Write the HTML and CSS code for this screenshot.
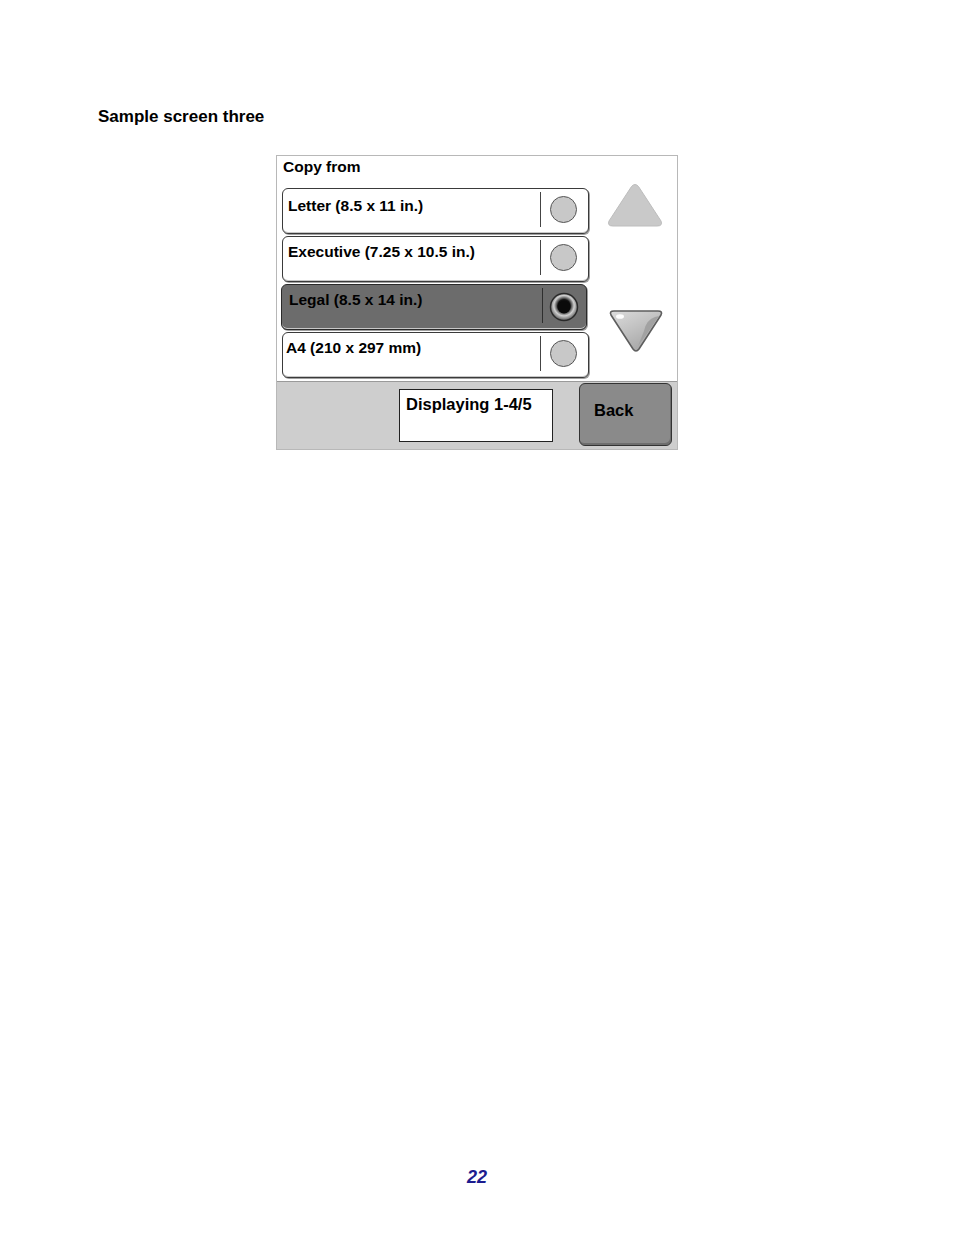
FILE: index.html
```html
<!DOCTYPE html>
<html>
<head>
<meta charset="utf-8">
<link rel="stylesheet" href="styles.css">
</head>
<body>
<div class="page">
  <h2 class="heading">Sample screen three</h2>
  <div class="screen">
    <div class="main">
      <div class="listcol">
        <div class="title">Copy from</div>
        <div class="rows">
          <div class="row r1">
            <span class="label">Letter (8.5 x 11 in.)</span>
            <span class="divider"></span>
            <span class="radio"></span>
          </div>
          <div class="row r2">
            <span class="label">Executive (7.25 x 10.5 in.)</span>
            <span class="divider"></span>
            <span class="radio"></span>
          </div>
          <div class="row r3 selected">
            <span class="label">Legal (8.5 x 14 in.)</span>
            <span class="divider"></span>
            <svg class="radio-sel" width="30" height="30" viewBox="0 0 30 30">
              <defs>
                <radialGradient id="rg" cx="50%" cy="45%" r="50%">
                  <stop offset="0%" stop-color="#111"/>
                  <stop offset="45%" stop-color="#111"/>
                  <stop offset="55%" stop-color="#555"/>
                  <stop offset="75%" stop-color="#d0d0d0"/>
                  <stop offset="100%" stop-color="#7a7a7a"/>
                </radialGradient>
              </defs>
              <circle cx="15" cy="15" r="13.5" fill="url(#rg)" stroke="#2a2a2a" stroke-width="1.5"/>
              <circle cx="15" cy="15" r="6.5" fill="#0a0a0a"/>
            </svg>
          </div>
          <div class="row r4">
            <span class="label">A4 (210 x 297 mm)</span>
            <span class="divider"></span>
            <span class="radio"></span>
          </div>
        </div>
      </div>
      <div class="arrows">
        <svg class="up" width="56" height="45" viewBox="0 0 56 45">
          <path d="M24.5 3.5 Q28 -0.5 31.5 3.5 L54 38 Q56 43 50 43 L6 43 Q0 43 2 38 Z" fill="#c9c9c9" stroke="#bdbdbd" stroke-width="1"/>
        </svg>
        <svg class="down" width="56" height="44" viewBox="0 0 56 44">
          <defs>
            <linearGradient id="dg" x1="0" y1="0" x2="0.6" y2="1">
              <stop offset="0%" stop-color="#dcdcdc"/>
              <stop offset="50%" stop-color="#c2c2c2"/>
              <stop offset="100%" stop-color="#a6a6a6"/>
            </linearGradient>
          </defs>
          <path d="M6 2 L50 2 Q55 2 53 6 L31 40 Q28 44 25 40 L3 6 Q1 2 6 2 Z" fill="url(#dg)" stroke="#5e5e5e" stroke-width="1.6"/>
          <path d="M47 8 Q38 11 36 22 L30 37 Q40 24 51 7 Z" fill="#a2a2a2"/>
          <ellipse cx="12" cy="7.5" rx="4" ry="2.3" fill="#ffffff" opacity="0.95"/>
        </svg>
      </div>
    </div>
    <div class="footer">
      <div class="display">Displaying 1-4/5</div>
      <div class="back">Back</div>
    </div>
  </div>
  <div class="pagenum">22</div>
</div>
</body>
</html>
```
FILE: styles.css
```css
html, body {
  margin: 0;
  padding: 0;
  background: #ffffff;
}
body {
  font-family: "Liberation Sans", Arial, sans-serif;
  color: #000;
}
.page {
  width: 954px;
  height: 1235px;
  padding-top: 107px;
  box-sizing: border-box;
}
.heading {
  margin: 0 0 0 98px;
  font-size: 17px;
  line-height: 20px;
  font-weight: bold;
}
.screen {
  margin: 28px 0 0 276px;
  width: 402px;
  height: 295px;
  box-sizing: border-box;
  border: 1px solid #b8b8b8;
  display: flex;
  flex-direction: column;
  background: #fff;
}
.main {
  display: flex;
  height: 225px;
}
.listcol {
  width: 313px;
  padding-left: 5px;
}
.title {
  padding: 2px 0 0 1px;
  font-size: 15.5px;
  line-height: 18px;
  font-weight: bold;
  margin-bottom: 12px;
}
.rows {
  display: flex;
  flex-direction: column;
  gap: 2px;
}
.row {
  position: relative;
  width: 307px;
  height: 46px;
  box-sizing: border-box;
  border: 1px solid #3a3a3a;
  border-radius: 6px;
  box-shadow: 1px 1px 0 #a0a0a0, inset 0 -1px 0 #c8c8c8;
  background: #fff;
  display: flex;
  align-items: flex-start;
}
.label {
  width: 257px;
  padding: 8px 0 0 5px;
  box-sizing: border-box;
  font-size: 15.5px;
  line-height: 18px;
  font-weight: bold;
  white-space: nowrap;
}
.r4 .label { padding-left: 3px; padding-top: 6px; }
.r2 .label { padding-top: 6px; }
.divider {
  width: 1px;
  height: 35px;
  margin-top: 3px;
  background: #444;
}
.radio {
  width: 25px;
  height: 25px;
  margin: 7px 0 0 9px;
  border-radius: 50%;
  background: #c8c8c8;
  border: 1.5px solid #555;
}
.selected {
  background: #6c6c6c;
  border-color: #2a2a2a;
  width: 306px;
  margin-left: -1px;
}
.selected .label { padding: 6px 0 0 7px; }
.selected .divider { background: #2e2e2e; margin-left: 3px; }
.radio-sel {
  margin: 7px 0 0 6px;
}
.arrows {
  flex: 1;
  display: flex;
  flex-direction: column;
  align-items: flex-start;
}
.up {
  margin: 27px 0 0 12px;
}
.down {
  margin: 81px 0 0 13px;
}
.footer {
  flex: 1;
  border-top: 1px solid #9a9a9a;
  background: #cecece;
  display: flex;
  align-items: flex-start;
  padding-left: 122px;
}
.display {
  margin-top: 7px;
  width: 154px;
  height: 53px;
  box-sizing: border-box;
  border: 1px solid #222;
  background: #fff;
  padding: 4px 0 0 6px;
  font-size: 16.5px;
  line-height: 20px;
  font-weight: bold;
}
.back {
  margin: 1px 0 0 26px;
  width: 93px;
  height: 63px;
  box-sizing: border-box;
  border: 1px solid #333;
  border-radius: 6px;
  background: #8a8a8a;
  box-shadow: inset -1px -2px 0 #6e6e6e;
  padding: 16px 0 0 14px;
  font-size: 16.5px;
  line-height: 20px;
  font-weight: bold;
}
.pagenum {
  margin-top: 716px;
  text-align: center;
  font-size: 18px;
  line-height: 22px;
  font-weight: bold;
  font-style: italic;
  color: #1c1c8f;
}
```
